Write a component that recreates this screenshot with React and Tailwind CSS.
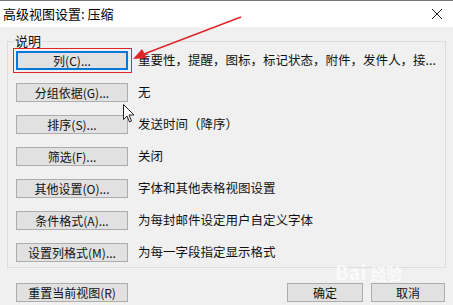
const rows = [
  { label: "列(C)...", desc: "重要性，提醒，图标，标记状态，附件，发件人，接...", focused: true },
  { label: "分组依据(G)...", desc: "无" },
  { label: "排序(S)...", desc: "发送时间（降序）" },
  { label: "筛选(F)...", desc: "关闭" },
  { label: "其他设置(O)...", desc: "字体和其他表格视图设置" },
  { label: "条件格式(A)...", desc: "为每封邮件设定用户自定义字体" },
  { label: "设置列格式(M)...", desc: "为每一字段指定显示格式" },
];

const font = "font-['Noto_Sans_CJK_SC','Noto_Sans',sans-serif]";

const Btn = ({ children, focused, className = "" }) => (
  <div
    className={`flex h-[19px] items-center justify-center bg-[#e1e1e1] text-[12px] leading-none text-[#111] ${
      focused ? "border-2 border-[#0078d7]" : "border border-[#adadad]"
    } ${className}`}
  >
    {children}
  </div>
);

export default function App() {
  return (
    <div className={`relative h-[305px] w-[453px] overflow-hidden bg-[#f0f0f0] ${font}`}>
      {/* title bar */}
      <div className="flex h-[27px] items-center justify-between border-t border-[#7a7a7a] bg-white pl-[3px] pr-[10px]">
        <span className="text-[13px] text-black">高级视图设置: 压缩</span>
        <svg width="12" height="12" viewBox="0 0 12 12" className="text-[#222]">
          <path d="M1 1L11 11M11 1L1 11" stroke="currentColor" strokeWidth="1" />
        </svg>
      </div>

      {/* group box */}
      <div className="relative mx-[7px] mt-[14px] h-[227px] border border-[#dcdcdc]">
        <span className="absolute -top-[10px] left-[6px] bg-[#f0f0f0] px-[1px] text-[13px] leading-[18px] text-[#111]">
          说明
        </span>
        <div className="flex flex-col gap-[13px] pl-[8px] pt-[9px]">
          {rows.map((r) => (
            <div key={r.label} className="flex items-center gap-[10px]">
              <Btn focused={r.focused} className="w-[112px]">
                {r.label}
              </Btn>
              <span className="text-[12.5px] leading-none text-[#111]">{r.desc}</span>
            </div>
          ))}
        </div>
      </div>

      {/* bottom buttons */}
      <div className="mt-[15px] flex items-center pl-[16px] pr-[8px]">
        <Btn className="w-[112px]">重置当前视图(R)</Btn>
        <div className="flex-1" />
        <Btn className="w-[76px]">确定</Btn>
        <Btn className="ml-[8px] w-[74px]">取消</Btn>
      </div>

      {/* watermark */}
      <div className="pointer-events-none absolute left-[335px] top-[262px] text-[20px] font-bold leading-none text-white/70">
        Bai<span className="ml-[4px] text-[16px]">经验</span>
      </div>

      {/* red annotation */}
      <div className="pointer-events-none absolute left-[13px] top-[48px] h-[25px] w-[119px] border-[1.5px] border-[#e0262b]" />
      <svg className="pointer-events-none absolute left-0 top-0" width="453" height="305">
        <line x1="241" y1="17" x2="144" y2="54" stroke="#e0262b" strokeWidth="1.5" />
        <path d="M133 59L142 49L147 58Z" fill="#e0262b" />
      </svg>

      {/* cursor */}
      <svg className="pointer-events-none absolute left-[123px] top-[104px]" width="12" height="19" viewBox="0 0 12 19">
        <path d="M0.5 0.5V15.5L4 12L6.5 18L8.5 17L6 11H11Z" fill="white" stroke="#222" strokeWidth="1" strokeLinejoin="round" />
      </svg>
    </div>
  );
}
